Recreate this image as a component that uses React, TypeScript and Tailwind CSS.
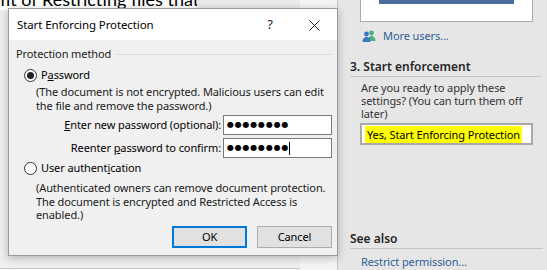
import React from 'react';

const PeopleIcon = () => (
  <svg width="14" height="12" viewBox="0 0 14 12">
    <circle cx="9.5" cy="3" r="2.4" fill="#4caf7a" />
    <path d="M5.5 11 C5.5 7.5 7.5 6 9.5 6 C11.5 6 13.5 7.5 13.5 11 Z" fill="#4caf7a" />
    <circle cx="4.5" cy="4" r="2.4" fill="#3a78c2" />
    <path d="M0.5 12 C0.5 8.5 2.5 7 4.5 7 C6.5 7 8.5 8.5 8.5 12 Z" fill="#3a78c2" />
  </svg>
);

const Radio = ({ checked }: { checked?: boolean }) => (
  <div className="w-[13px] h-[13px] rounded-full border border-[#333] bg-white flex items-center justify-center shrink-0">
    {checked && <div className="w-[7px] h-[7px] rounded-full bg-[#222]" />}
  </div>
);

const Dots = ({ caret }: { caret?: boolean }) => (
  <div className="flex items-center h-full pl-[3px]">
    <span className="font-['DejaVu_Sans',sans-serif] text-[8px] tracking-[0.8px] leading-none text-black">●●●●●●●●</span>
    {caret && <span className="w-px h-[13px] bg-black" />}
  </div>
);

export default function App() {
  return (
    <div className="w-[547px] h-[270px] flex overflow-hidden relative font-['Noto_Sans',sans-serif] text-[11px] tracking-[-0.1px] text-black whitespace-nowrap">
      {/* Document area */}
      <div className="w-[337px] h-full flex flex-col bg-[#efefef]">
        <div className="h-[255px] flex">
          <div className="w-[300px] flex flex-col">
            <div className="h-[10px] flex">
              <div className="w-[197px] bg-white overflow-hidden relative">
                <div className="absolute left-0 -top-[13px] font-['Lato',sans-serif] text-[18px] leading-[24px] tracking-normal text-black">fit of Restricting files that</div>
              </div>
              <div className="flex-1 bg-[#ebebeb]" />
            </div>
            <div className="flex-1" />
          </div>
          <div className="flex-1 bg-[#f4f4f4]" />
        </div>
        <div className="flex-1 flex">
          <div className="w-[300px] flex flex-col">
            <div className="h-[13px]" />
            <div className="flex-1 border-t border-[#c8c8c8] bg-[#f7f7f7]" />
          </div>
          <div className="flex-1 bg-[#f4f4f4]" />
        </div>
      </div>

      {/* Task pane */}
      <div className="flex-1 h-full bg-[#e6e6e6] border-l border-[#c6c6c6] flex flex-col">
        <div className="ml-[22px] w-[173px] h-[22px] bg-white border border-t-0 border-[#ababab] flex justify-center shrink-0">
          <div className="w-[135px] h-[4px] bg-[#4a6b9c]" />
        </div>
        <div className="ml-[24px] mt-[7px] h-[14px] flex items-center gap-[7px]">
          <PeopleIcon />
          <span className="text-[#2e6096] leading-[14px]">More users...</span>
        </div>
        <div className="ml-[12px] mr-[6px] mt-[16px] border-b border-[#c4c4c4] pb-[1px]">
          <div className="text-[12px] font-semibold text-[#262626] leading-[16px] tracking-normal">3. Start enforcement</div>
        </div>
        <div className="ml-[23px] mt-[4px] text-[#333] leading-[13px]">
          Are you ready to apply these<br />settings? (You can turn them off<br />later)
        </div>
        <div className="ml-[22px] mt-[3px] w-[173px] h-[22px] border-2 border-[#a9a9a9] bg-white flex items-center pl-[3px] shrink-0">
          <span className="bg-[#ffff00] h-[17px] leading-[17px] px-[2px] text-[11px] text-black">Yes, Start Enforcing Protection</span>
        </div>
        <div className="flex-1" />
        <div className="ml-[12px] mr-[4px] border-b border-[#c4c4c4] pb-[1px]">
          <div className="text-[12px] font-semibold text-[#262626] leading-[16px] tracking-normal">See also</div>
        </div>
        <div className="ml-[23px] mt-[6px] mb-[1px] text-[#2e6096] leading-[14px]">Restrict permission...</div>
      </div>

      {/* Dialog */}
      <div className="absolute left-[8px] top-[8px] w-[330px] h-[248px] flex flex-col border border-[#9a9a9a] shadow-[0_2px_8px_rgba(0,0,0,0.25)] bg-[#f0f0f0]">
        <div className="h-[31px] bg-white flex items-center pl-[8px] pt-[1px] shrink-0">
          <span className="flex-1 leading-[14px] text-[11.5px]">Start Enforcing Protection</span>
          <span className="w-[10px] text-center text-[13px] text-[#222] mr-[34px]">?</span>
          <svg width="11" height="11" viewBox="0 0 11 11" className="mr-[17px]">
            <path d="M0.5 0.5 L10.5 10.5 M10.5 0.5 L0.5 10.5" stroke="#222" strokeWidth="1" />
          </svg>
        </div>
        <div className="flex-1 flex flex-col pl-[7px] pr-[5px]">
          <div className="mt-[7px] flex items-center h-[14px]">
            <span className="text-[#1a1a1a] mr-[4px]">Protection method</span>
            <div className="flex-1 border-t border-[#dcdcdc]" />
          </div>
          <div className="mt-[7px] ml-[8px] flex items-center h-[14px] gap-[4px]">
            <Radio checked />
            <span>P<span className="underline">a</span>ssword</span>
          </div>
          <div className="ml-[20px] mt-[3px] leading-[14px] text-[#1a1a1a]">
            (The document is not encrypted. Malicious users can edit<br />the file and remove the password.)
          </div>
          <div className="mt-[2px] flex items-center h-[20px]">
            <span className="w-[207px] text-right pr-[2px]"><span className="underline">E</span>nter new password (optional):</span>
            <div className="w-[109px] h-[20px] bg-white border border-[#7a7a7a]"><Dots /></div>
          </div>
          <div className="mt-[3px] flex items-center h-[20px]">
            <span className="w-[207px] text-right pr-[2px]">Reenter <span className="underline">p</span>assword to confirm:</span>
            <div className="w-[109px] h-[20px] bg-white border border-[#7a7a7a]"><Dots caret /></div>
          </div>
          <div className="mt-[3px] ml-[8px] flex items-center h-[14px] gap-[4px]">
            <Radio />
            <span>User authent<span className="underline">i</span>cation</span>
          </div>
          <div className="ml-[20px] mt-[6px] leading-[13.5px] text-[#1a1a1a]">
            (Authenticated owners can remove document protection.<br />The document is encrypted and Restricted Access is<br />enabled.)
          </div>
          <div className="mt-[4px] flex justify-end gap-[10px]">
            <button className="w-[75px] h-[22px] bg-[#e1e1e1] border-2 border-[#0078d7] leading-none">OK</button>
            <button className="w-[75px] h-[22px] bg-[#e1e1e1] border border-[#adadad] leading-none">Cancel</button>
          </div>
        </div>
      </div>
    </div>
  );
}
